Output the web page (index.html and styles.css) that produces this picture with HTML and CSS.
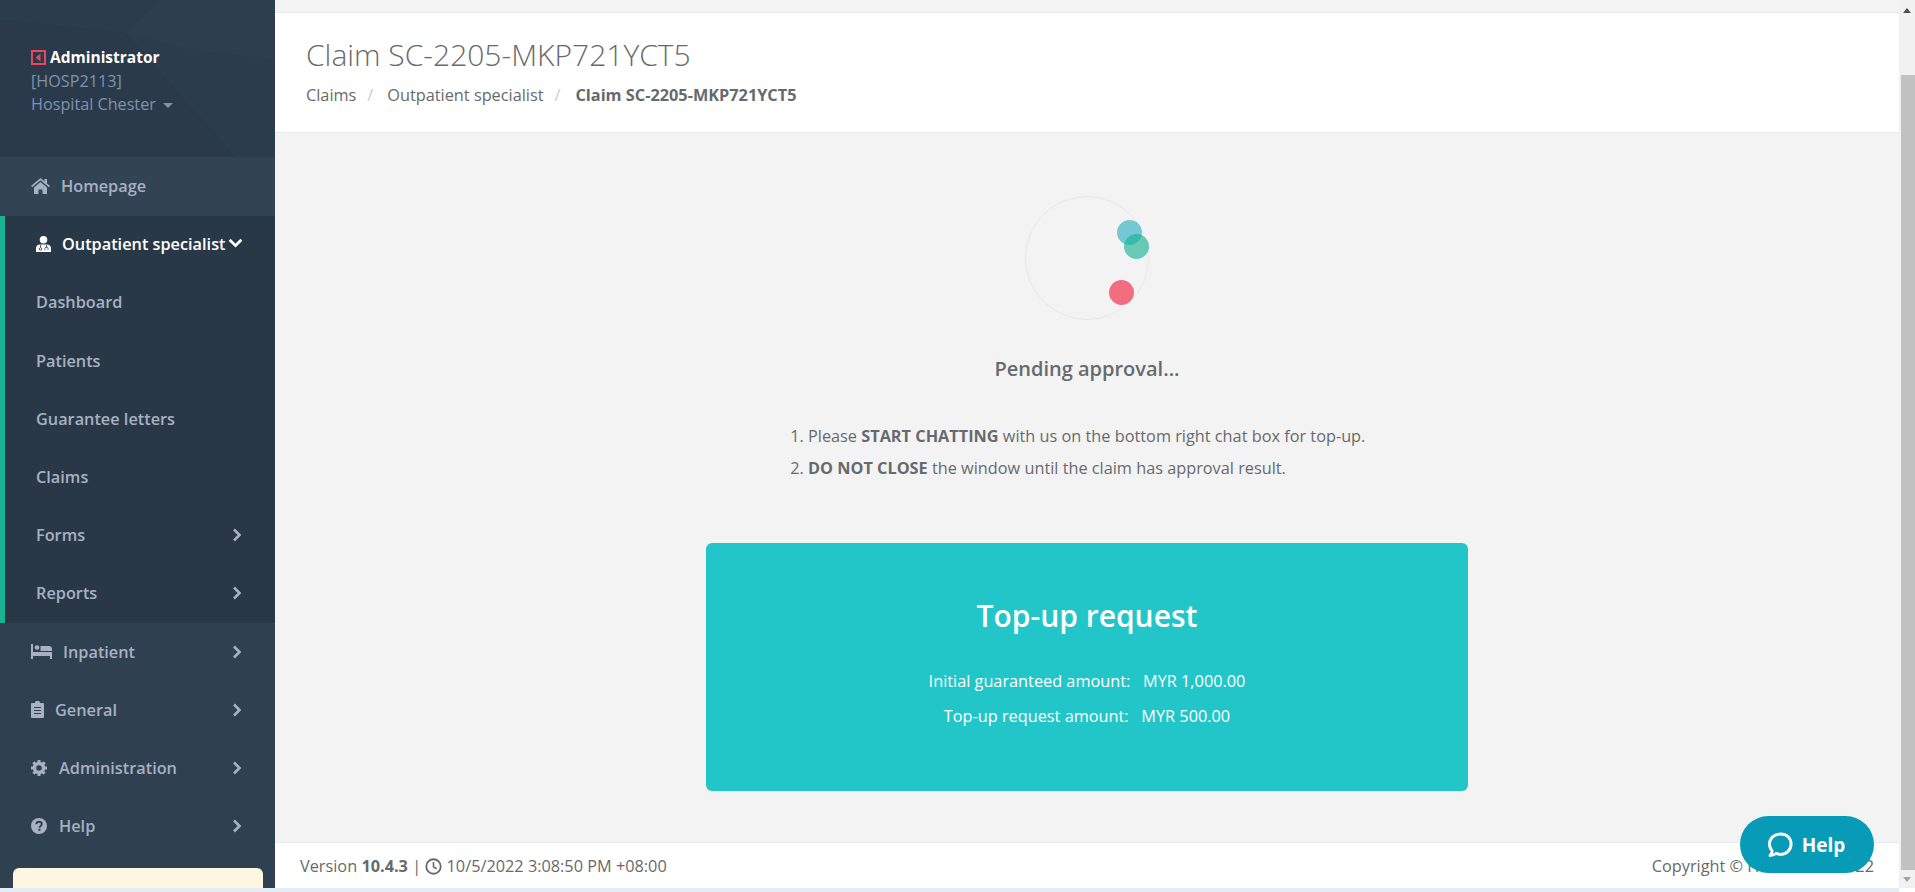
FILE: index.html

```html
<!DOCTYPE html>
<html>
<head>
    <title>Claim SC-2205-MKP721YCT5</title>
    <link rel="stylesheet" href="styles.css">
</head>
<body>
    <div class="app">
        <nav class="sidebar">
            <div class="profile">
                <svg class="profile-bg" viewBox="0 0 275 157" preserveAspectRatio="none">
                    <polygon points="0,0 275,0 275,157 235,157 125,33 0,20" fill="#2b3c4c"/>
                    <polygon points="125,33 160,0 275,0 275,60 190,50" fill="#2d3e4e"/>
                    <polygon points="125,33 235,157 0,157 0,20" fill="#2a3a4a"/>
                </svg>
                <div class="profile-name">
                    <svg class="back-icon" viewBox="0 0 15 15"><rect x="1" y="1" width="13" height="13" fill="none" stroke="#e8475f" stroke-width="2"/><path d="M9.500 3.500v8L4.500 7.500z" fill="#e8475f"/></svg>
                    Administrator
                </div>
                <div class="profile-sub">[HOSP2113]</div>
                <div class="profile-sub">Hospital Chester <span class="caret"></span></div>
            </div>

            <a class="nav-item nav-home">
                <svg class="icon" viewBox="0 0 19 16"><path d="M9.500 0 0 8l1.100 1.300 8.400-7 8.400 7L19 8l-3-2.500V1h-2.500v2.400z M9.500 4 3 9.400V16h4.500v-4.500h4V16H16V9.400z" fill="#a7b1c2"/></svg>
                <span class="nav-text">Homepage</span>
            </a>

            <div class="nav-group">
                <a class="nav-item nav-open">
                    <svg class="icon-doctor" viewBox="0 0 15 16"><circle cx="7.500" cy="3.800" r="3.800" fill="#fff"/><path d="M0 16v-3.500c0-2.500 1.800-4 4-4h7c2.200 0 4 1.500 4 4V16z" fill="#fff"/><path d="M4.500 9v2.500M10.500 9v2.500" stroke="#293846" stroke-width=".8"/><circle cx="4.500" cy="13" r="1.300" fill="none" stroke="#293846" stroke-width=".8"/><path d="M9 14v-1.500a1.500 1.500 0 0 1 3 0V14" fill="none" stroke="#293846" stroke-width=".8"/></svg>
                    <span class="nav-text">Outpatient specialist</span>
                    <svg class="chevron-down" viewBox="0 0 14 10"><path d="M1.500 1.500 7 7l5.500-5.500" fill="none" stroke="#fff" stroke-width="2.600"/></svg>
                </a>
                <a class="nav-item sub-item"><span class="nav-text">Dashboard</span></a>
                <a class="nav-item sub-item"><span class="nav-text">Patients</span></a>
                <a class="nav-item sub-item"><span class="nav-text">Guarantee letters</span></a>
                <a class="nav-item sub-item"><span class="nav-text">Claims</span></a>
                <a class="nav-item sub-item">
                    <span class="nav-text">Forms</span>
                    <svg class="chevron" viewBox="0 0 10 14"><path d="M2 1.500 7.500 7 2 12.500" fill="none" stroke="#a7b1c2" stroke-width="2.600"/></svg>
                </a>
                <a class="nav-item sub-item">
                    <span class="nav-text">Reports</span>
                    <svg class="chevron" viewBox="0 0 10 14"><path d="M2 1.500 7.500 7 2 12.500" fill="none" stroke="#a7b1c2" stroke-width="2.600"/></svg>
                </a>
            </div>

            <a class="nav-item">
                <svg class="icon-bed" viewBox="0 0 21 15"><path d="M0 0h2v8h19v7h-2v-3H2v3H0z" fill="#a7b1c2"/><circle cx="6" cy="3.500" r="2.300" fill="#a7b1c2"/><path d="M9.500 2H18c2 0 3 1.500 3 3v2H9.500z" fill="#a7b1c2"/></svg>
                <span class="nav-text">Inpatient</span>
                <svg class="chevron" viewBox="0 0 10 14"><path d="M2 1.500 7.500 7 2 12.500" fill="none" stroke="#a7b1c2" stroke-width="2.600"/></svg>
            </a>
            <a class="nav-item">
                <svg class="icon-clip" viewBox="0 0 13 17"><path d="M1 2h3a2.500 2.500 0 0 1 5 0h3a1 1 0 0 1 1 1v13a1 1 0 0 1-1 1H1a1 1 0 0 1-1-1V3a1 1 0 0 1 1-1z" fill="#a7b1c2"/><path d="M3 6.500h7M3 9.500h7M3 12.500h7" stroke="#2f4050" stroke-width="1.200"/></svg>
                <span class="nav-text">General</span>
                <svg class="chevron" viewBox="0 0 10 14"><path d="M2 1.500 7.500 7 2 12.500" fill="none" stroke="#a7b1c2" stroke-width="2.600"/></svg>
            </a>
            <a class="nav-item">
                <svg class="icon-gear" viewBox="0 0 16 16"><circle cx="8" cy="8" r="4.500" fill="none" stroke="#a7b1c2" stroke-width="3.400"/><path d="M8 0v16M0 8h16M2.300 2.300l11.400 11.400M13.700 2.300 2.300 13.700" stroke="#a7b1c2" stroke-width="3" stroke-dasharray="2.600 10.800"/></svg>
                <span class="nav-text">Administration</span>
                <svg class="chevron" viewBox="0 0 10 14"><path d="M2 1.500 7.500 7 2 12.500" fill="none" stroke="#a7b1c2" stroke-width="2.600"/></svg>
            </a>
            <a class="nav-item">
                <svg class="icon-gear" viewBox="0 0 16 16"><circle cx="8" cy="8" r="8" fill="#a7b1c2"/><path d="M5.300 6.200C5.500 4.600 6.600 3.800 8 3.800c1.600 0 2.800 1 2.800 2.300 0 2-2.300 1.900-2.300 3.700" fill="none" stroke="#2f4050" stroke-width="1.900"/><rect x="7.400" y="10.800" width="2.100" height="2" fill="#2f4050"/></svg>
                <span class="nav-text">Help</span>
                <svg class="chevron" viewBox="0 0 10 14"><path d="M2 1.500 7.500 7 2 12.500" fill="none" stroke="#a7b1c2" stroke-width="2.600"/></svg>
            </a>

            <div class="notice"></div>
        </nav>

        <div class="main">
            <div class="top-strip"></div>
            <header class="page-heading">
                <h2>Claim SC-2205-MKP721YCT5</h2>
                <ol class="breadcrumb">
                    <li>Claims</li>
                    <li class="sep">/</li>
                    <li>Outpatient specialist</li>
                    <li class="sep">/</li>
                    <li class="current">Claim SC-2205-MKP721YCT5</li>
                </ol>
            </header>

            <section class="content">
                <div class="spinner">
                    <span class="ball ball-blue"></span>
                    <span class="ball ball-green"></span>
                    <span class="ball ball-red"></span>
                </div>
                <h4 class="pending">Pending approval...</h4>
                <ol class="steps">
                    <li>Please <strong>START CHATTING</strong> with us on the bottom right chat box for top-up.</li>
                    <li><strong>DO NOT CLOSE</strong> the window until the claim has approval result.</li>
                </ol>
                <div class="topup">
                    <h2>Top-up request</h2>
                    <p>Initial guaranteed amount: &nbsp; MYR 1,000.00</p>
                    <p>Top-up request amount: &nbsp; MYR 500.00</p>
                </div>
            </section>

            <footer class="footer">
                <div>
                    Version <strong>10.4.3</strong> |
                    <svg class="clock" viewBox="0 0 16 16"><circle cx="8" cy="8" r="6.800" fill="none" stroke="#676a6c" stroke-width="1.700"/><path d="M8 3.800V8.300l3 1.800" fill="none" stroke="#676a6c" stroke-width="1.500"/></svg>
                    10/5/2022 3:08:50 PM +08:00
                </div>
                <div>Copyright &copy; HealthCare 2022</div>
            </footer>
        </div>

        <div class="scrollbar">
            <span class="arrow-up"></span>
            <span class="thumb"></span>
            <span class="arrow-down"></span>
        </div>
    </div>
    <div class="bottom-strip"></div>

    <a class="help-btn">
        <svg viewBox="0 0 24 24"><path d="M12.500 2.500c5.300 0 9 3.700 9 8.700s-3.900 8.800-9 8.800c-1.300 0-2.600-.3-3.700-.8-1.500 1-3.200 1.500-5.300 1.800 1.100-1.300 1.700-2.600 1.800-3.900-1.500-1.500-2.300-3.600-2.300-5.900 0-5 4-8.700 9.500-8.700z" fill="none" stroke="#fff" stroke-width="2.500" stroke-linejoin="round"/></svg>
        Help
    </a>
</body>
</html>
```

FILE: styles.css

```css
* {
    box-sizing: border-box;
}
html, body {
    margin: 0;
    height: 100%;
    overflow: hidden;
}
body {
    font-family: "Open Sans", sans-serif;
    font-size: 16.300px;
    color: #676a6c;
    background-color: #fff;
    display: flex;
    flex-direction: column;
}
.app {
    display: flex;
    height: 888px;
    overflow: hidden;
}
.bottom-strip {
    height: 4px;
    width: 1899px;
    background-color: #e3edf5;
}

/* sidebar */
.sidebar {
    width: 275px;
    flex-shrink: 0;
    background-color: #2f4050;
    overflow: hidden;
}
.profile {
    position: relative;
    height: 157px;
    padding: 46px 31px 0;
    background-color: #2a3a4a;
    line-height: 23.500px;
}
.profile-bg {
    position: absolute;
    top: 0;
    left: 0;
    width: 100%;
    height: 100%;
}
.profile-name, .profile-sub {
    position: relative;
}
.profile-name {
    color: #fff;
    font-weight: 700;
    font-size: 15.500px;
    display: flex;
    align-items: center;
    gap: 4px;
}
.back-icon {
    width: 15px;
    height: 15px;
}
.profile-sub {
    color: #7e93ae;
    font-size: 16.200px;
}
.caret {
    display: inline-block;
    margin-left: 3px;
    vertical-align: middle;
    border-top: 5px solid #7e93ae;
    border-left: 5px solid transparent;
    border-right: 5px solid transparent;
}
.nav-item {
    display: flex;
    align-items: center;
    height: 58.200px;
    padding: 0 31px;
    color: #a7b1c2;
    font-size: 16.300px;
    font-weight: 600;
    position: relative;
}
.nav-home {
    height: 59px;
    padding-bottom: 2px;
    background-color: #324354;
}
.nav-text {
    white-space: nowrap;
}
.nav-group {
    background-color: #293846;
    border-left: 5px solid #1ab394;
}
.nav-open {
    height: 57.400px;
    padding-bottom: 2px;
    color: #fff;
}
.sub-item {
    padding-left: 31px;
}
.icon {
    width: 19px;
    height: 16px;
    margin-right: 11px;
}
.icon-doctor {
    width: 15px;
    height: 16px;
    margin-right: 11px;
}
.icon-bed {
    width: 21px;
    height: 15px;
    margin-right: 11px;
}
.icon-clip {
    width: 13px;
    height: 17px;
    margin-right: 11px;
}
.icon-gear {
    width: 16px;
    height: 16px;
    margin-right: 12px;
}
.chevron {
    width: 10px;
    height: 14px;
    position: absolute;
    left: 232px;
}
.nav-group .chevron {
    left: 227px;
}
.chevron-down {
    width: 15px;
    height: 11px;
    margin-left: 2px;
}
.notice {
    height: 40px;
    margin: 13px 12px 0 13px;
    background-color: #fff6e1;
    border-radius: 6px 6px 0 0;
}

/* main column */
.main {
    flex: 1;
    display: flex;
    flex-direction: column;
    min-width: 0;
    background-color: #f3f3f4;
}
.top-strip {
    height: 13px;
    background-color: #f3f3f4;
    border-bottom: 1px solid #e7eaec;
}
.page-heading {
    height: 120px;
    padding: 23px 31px 0;
    background-color: #fff;
    border-bottom: 1px solid #e7eaec;
}
.page-heading h2 {
    margin: 0;
    font-size: 30px;
    font-weight: 300;
    line-height: 38px;
}
.breadcrumb {
    display: flex;
    margin: 10px 0 0;
    padding: 0;
    list-style: none;
    line-height: 22px;
}
.sep {
    margin: 0 14px 0 11px;
    color: #ccc;
}
.current {
    font-weight: 700;
    margin-left: 1px;
}
.content {
    flex: 1;
    display: flex;
    flex-direction: column;
    align-items: center;
    padding-top: 63px;
}
.spinner {
    position: relative;
    width: 124px;
    height: 124px;
    border: 1px solid #e8e8e9;
    border-radius: 50%;
}
.ball {
    position: absolute;
    width: 25px;
    height: 25px;
    border-radius: 50%;
}
.ball-blue {
    left: 91px;
    top: 23px;
    background-color: rgba(35, 170, 190, 0.6);
}
.ball-green {
    left: 98px;
    top: 37px;
    background-color: rgba(26, 179, 148, 0.65);
}
.ball-red {
    left: 83px;
    top: 83px;
    background-color: #f16d7f;
}
.pending {
    margin: 36px 0 0;
    font-size: 20px;
    font-weight: 600;
    line-height: 26px;
}
.steps {
    width: 596px;
    margin: 39px 0 0 0;
    padding: 0 0 0 19px;
    line-height: 31.500px;
}
.topup {
    width: 762px;
    height: 248px;
    margin-top: 59px;
    padding-top: 54px;
    background-color: #23c6c8;
    border-radius: 6px;
    color: #fff;
    text-align: center;
}
.topup h2 {
    margin: 0 0 29px;
    font-size: 30px;
    font-weight: 600;
    line-height: 38px;
}
.topup p {
    margin: 0;
    line-height: 35px;
}
.footer {
    height: 46px;
    display: flex;
    justify-content: space-between;
    align-items: center;
    padding: 0 25px;
    background-color: #fff;
    border-top: 1px solid #e7eaec;
}
.clock {
    width: 17px;
    height: 17px;
    vertical-align: -3px;
}

/* scrollbar */
.scrollbar {
    width: 16px;
    flex-shrink: 0;
    background-color: #f1f1f1;
    display: flex;
    flex-direction: column;
    align-items: center;
}
.thumb {
    width: 14px;
    margin-left: 2px;
    height: 795px;
    margin-top: 62px;
    background-color: #c1c1c1;
}
.arrow-up {
    margin-top: 8px;
    border-bottom: 5px solid #505050;
    border-left: 4.500px solid transparent;
    border-right: 4.500px solid transparent;
}
.arrow-down {
    margin-top: 7px;
    border-top: 5px solid #a3a3a3;
    border-left: 4.500px solid transparent;
    border-right: 4.500px solid transparent;
}

/* chat widget sits over the footer */
.help-btn {
    position: absolute;
    left: 1740px;
    top: 816px;
    width: 134px;
    height: 57px;
    display: flex;
    align-items: center;
    justify-content: center;
    gap: 8px;
    background-color: #089bb8;
    border-radius: 29px;
    color: #fff;
    font-size: 19px;
    font-weight: 700;
}
.help-btn svg {
    width: 28px;
    height: 28px;
    margin-left: -3px;
}
```
